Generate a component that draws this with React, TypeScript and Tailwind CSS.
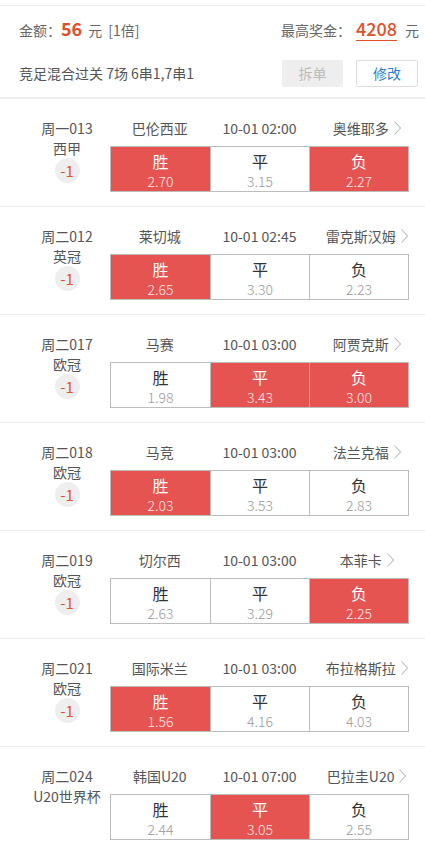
import React from 'react'

type Match = {
  code: string
  league: string
  handicap?: string
  home: string
  time: string
  away: string
  odds: [string, string, string]
  picked: boolean[]
}

const MATCHES: Match[] = [
  { code: '周一013', league: '西甲', handicap: '-1', home: '巴伦西亚', time: '10-01 02:00', away: '奥维耶多', odds: ['2.70', '3.15', '2.27'], picked: [true, false, true] },
  { code: '周二012', league: '英冠', handicap: '-1', home: '莱切城', time: '10-01 02:45', away: '雷克斯汉姆', odds: ['2.65', '3.30', '2.23'], picked: [true, false, false] },
  { code: '周二017', league: '欧冠', handicap: '-1', home: '马赛', time: '10-01 03:00', away: '阿贾克斯', odds: ['1.98', '3.43', '3.00'], picked: [false, true, true] },
  { code: '周二018', league: '欧冠', handicap: '-1', home: '马竞', time: '10-01 03:00', away: '法兰克福', odds: ['2.03', '3.53', '2.83'], picked: [true, false, false] },
  { code: '周二019', league: '欧冠', handicap: '-1', home: '切尔西', time: '10-01 03:00', away: '本菲卡', odds: ['2.63', '3.29', '2.25'], picked: [false, false, true] },
  { code: '周二021', league: '欧冠', handicap: '-1', home: '国际米兰', time: '10-01 03:00', away: '布拉格斯拉', odds: ['1.56', '4.16', '4.03'], picked: [true, false, false] },
  { code: '周二024', league: 'U20世界杯', home: '韩国U20', time: '10-01 07:00', away: '巴拉圭U20', odds: ['2.44', '3.05', '2.55'], picked: [false, true, false] },
]

const LABELS = ['胜', '平', '负']

function Chevron() {
  return (
    <svg width="9" height="16" viewBox="0 0 9 16" className="ml-[4px] shrink-0">
      <polyline points="1.5,1.5 7.5,8 1.5,14.5" fill="none" stroke="#bbbbbb" strokeWidth="1.1" />
    </svg>
  )
}

function MatchRow({ m }: { m: Match }) {
  return (
    <div className="flex h-[108px] border-b border-[#ededed]">
      {/* 左侧 场次信息 */}
      <div className="w-[110px] shrink-0 pl-[24px] pt-[19px] flex flex-col items-center text-[14px] leading-[20px] text-[#555]">
        <div>{m.code}</div>
        <div className="whitespace-nowrap">{m.league}</div>
        {m.handicap && (
          <div className="w-[25px] h-[25px] rounded-full bg-[#eeeeee] flex items-center justify-center text-[15px] text-[#e0552f]">
            {m.handicap}
          </div>
        )}
      </div>
      <div className="w-[299px] shrink-0 flex flex-col">
        <div className="mt-[19px] h-[20px] grid grid-cols-3 text-[14px] leading-[20px] text-[#555]">
          <div className="text-center">{m.home}</div>
          <div className="text-center whitespace-nowrap">{m.time}</div>
          <div className="flex items-center justify-center pl-[16px]">
            <span className="whitespace-nowrap">{m.away}</span>
            <Chevron />
          </div>
        </div>
        <div className="mt-[8px] h-[46px] grid grid-cols-3 border border-[#bdbdbd]">
          {LABELS.map((l, i) => (
            <div
              key={l}
              className={
                'flex flex-col items-center pt-[4px] ' +
                (i > 0 ? 'border-l border-[#bdbdbd] ' : '') +
                (m.picked[i] ? 'bg-[#e55451] text-white' : 'bg-white')
              }
            >
              <div className={'text-[16px] leading-[20px] ' + (m.picked[i] ? '' : 'text-[#333]')}>{l}</div>
              <div className={'text-[14px] leading-[20px] font-light ' + (m.picked[i] ? 'text-[#fde8e7]' : 'text-[#999]')}>
                {m.odds[i]}
              </div>
            </div>
          ))}
        </div>
      </div>
    </div>
  )
}

export default function App() {
  return (
    <div className="w-full bg-white font-['Noto_Sans_CJK_SC',sans-serif] pt-[5px]">
      <div className="border-t border-[#ededed]" />
      <div className="h-[44px] pl-[19px] pr-[6px] flex items-center justify-between text-[14px] text-[#666]">
        <div className="flex items-baseline">
          <span>金额：</span>
          <span className="text-[18px] font-bold text-[#e0502a]">56</span>
          <span className="ml-[6px]">元</span>
          <span className="ml-[6px]">[1倍]</span>
        </div>
        <div className="flex items-baseline">
          <span>最高奖金：</span>
          <span className="ml-[5px] text-[18px] font-medium text-[#e0502a] underline underline-offset-[4px] decoration-[1px]">4208</span>
          <span className="ml-[8px]">元</span>
        </div>
      </div>
      <div className="h-[49px] pl-[19px] pr-[7px] flex items-center justify-between border-b-2 border-[#efefef]">
        <span className="text-[14px] text-[#555]">竞足混合过关 7场 6串1,7串1</span>
        <div className="flex items-center gap-[13px]">
          <button className="w-[61px] h-[27px] rounded-[2px] bg-[#eeeeee] text-[14px] text-[#bbb]">拆单</button>
          <button className="w-[62px] h-[27px] rounded-[2px] border border-[#dddddd] bg-white text-[14px] text-[#2a7fd4]">修改</button>
        </div>
      </div>
      {MATCHES.map(m => (
        <MatchRow key={m.code} m={m} />
      ))}
    </div>
  )
}
